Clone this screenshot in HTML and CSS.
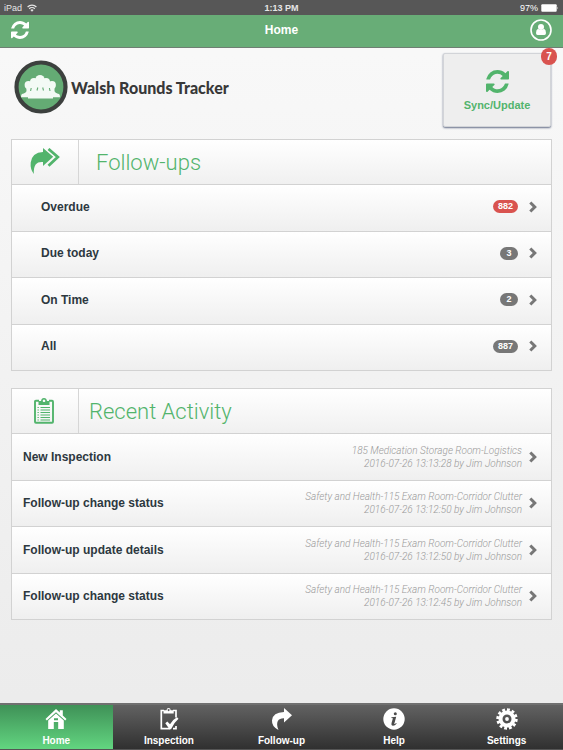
FILE: index.html
```html
<!DOCTYPE html>
<html lang="en">
<head>
<meta charset="utf-8">
<meta name="viewport" content="width=device-width, initial-scale=1">
<title>Walsh Rounds Tracker</title>
<link rel="stylesheet" href="styles.css">
</head>
<body>
<svg class="defs" aria-hidden="true">
  <symbol id="sync" viewBox="0 0 1536 1536"><path d="M1511 928q0 5-1 7-64 268-268 434.500t-478 166.500q-146 0-282.500-55t-243.500-157l-129 129q-19 19-45 19t-45-19-19-45v-448q0-26 19-45t45-19h448q26 0 45 19t19 45-19 45l-137 137q71 66 161 102t187 36q134 0 250-65t186-179q11-17 53-117 8-23 30-23h192q13 0 22.500 9.500t9.500 22.500zm25-800v448q0 26-19 45t-45 19h-448q-26 0-45-19t-19-45 19-45l138-138q-148-137-349-137-134 0-250 65t-186 179q-11 17-53 117-8 23-30 23h-199q-13 0-22.500-9.500t-9.500-22.500v-7q65-268 270-434.500t480-166.500q146 0 284 55.500t245 156.500l130-129q19-19 45-19t45 19 19 45z"/></symbol>
  <symbol id="chevron" viewBox="0 0 8 12"><path d="M1.300 1.500L5.800 6l-4.500 4.500" fill="none" stroke="currentColor" stroke-width="3"/></symbol>
</svg>

<div class="status">
  <span class="device">iPad
    <svg class="wifi" viewBox="0 0 10 8" aria-hidden="true"><path d="M.6 3a6.300 6.300 0 0 1 8.800 0M2.200 4.800a4 4 0 0 1 5.600 0" fill="none" stroke="currentColor" stroke-width="1.200"/><path d="M5 7.800L3.400 6.100a2.300 2.300 0 0 1 3.200 0z"/></svg>
  </span>
  <span class="clock">1:13 PM</span>
  <span class="power">97%
    <svg class="battery" viewBox="0 0 18 8" aria-hidden="true"><rect x=".3" y=".3" width="15.400" height="7.400" rx="1"/><path d="M16.500 2.500q1.300 1.500 0 3z"/></svg>
  </span>
</div>

<header class="bar">
  <button class="bar-button" type="button" aria-label="Sync"><svg class="bar-sync"><use href="#sync"/></svg></button>
  <h1>Home</h1>
  <button class="bar-button" type="button" aria-label="Account">
    <svg class="account" viewBox="0 0 22 22"><circle cx="11" cy="11" r="10" fill="none" stroke="currentColor" stroke-width="1.600"/><circle cx="11" cy="8" r="3"/><path d="M8 9.800q3 2.600 6 0 2 .8 2 4.200 0 2-1.600 2H7.600Q6 16 6 14q0-3.400 2-4.200z"/></svg>
  </button>
</header>

<main>
  <div class="intro">
    <div class="brand">
      <svg class="logo" viewBox="0 0 54 54" aria-hidden="true">
        <circle cx="27" cy="27" r="24.500" fill="#64ab74" stroke="#3c403e" stroke-width="4.200"/>
        <g fill="#f3faf5">
          <circle cx="26" cy="19.500" r="4.600"/><circle cx="20" cy="22" r="4"/><circle cx="32" cy="22" r="4"/><circle cx="14.500" cy="25" r="3.900"/><circle cx="38" cy="25" r="3.900"/>
          <path d="M12 22h28.500v9q.5 2 4.500 3 1 .4 1 3.200H39v1.300H14v-1.300H7q0-2.800 1-3.200 4-1 4.500-3z"/>
        </g>
        <path d="M16.600 31l.6-3M23 30.500l.8-3M29.500 30.500l-.8-3M36 31l-.6-3" stroke="#64ab74" stroke-width="1.100"/>
      </svg>
      <span>Walsh Rounds Tracker</span>
    </div>
    <button class="sync" type="button">
      <svg class="sync-icon" aria-hidden="true"><use href="#sync"/></svg>
      Sync/Update
      <span class="alert">7</span>
    </button>
  </div>

  <section class="panel">
    <div class="head">
      <div class="head-icon"><svg class="forward" viewBox="0 0 30 27" aria-hidden="true"><path d="M13 0l10.200 8.700L13 18v-4C7 13.500 3.500 16 3.800 26Q0 21 .7 14.500 2 4.500 13 4z"/><path d="M18.500 1l9.300 8-9.300 8.700" fill="none" stroke="currentColor" stroke-width="2.800"/></svg></div>
      <h2 class="spaced">Follow-ups</h2>
    </div>
    <ul class="rows indented">
      <li><a href="#overdue"><span class="name">Overdue</span><span class="count red">882</span><svg class="chevron"><use href="#chevron"/></svg></a></li>
      <li><a href="#today"><span class="name">Due today</span><span class="count">3</span><svg class="chevron"><use href="#chevron"/></svg></a></li>
      <li><a href="#on-time"><span class="name">On Time</span><span class="count">2</span><svg class="chevron"><use href="#chevron"/></svg></a></li>
      <li><a href="#all"><span class="name">All</span><span class="count">887</span><svg class="chevron"><use href="#chevron"/></svg></a></li>
    </ul>
  </section>

  <section class="panel">
    <div class="head">
      <div class="head-icon"><svg class="clipboard" viewBox="0 0 23 26" aria-hidden="true"><path d="M5 2.800H1.900Q1 2.800 1 3.700v20.100q0 .9.900.9h16.200q.9 0 .9-.9V3.700q0-.9-.9-.9H15" fill="none" stroke="currentColor" stroke-width="1.900"/><path fill-rule="evenodd" d="M4.500 3H7q.4-3 3-3t3 3h2.500v4h-11zM10 1.500a1.300 1.300 0 1 0 .01 0z"/><path d="M6.500 9.500h9.500M6.500 12h9.500M6.500 14.500h9.500M6.500 17h9.500M6.500 19.500h9.500M6.500 22h9.500M3.500 9.500h1.300M3.500 12h1.300M3.500 14.500h1.300M3.500 17h1.300M3.500 19.500h1.300M3.500 22h1.300" stroke="currentColor" stroke-width="1.100"/></svg></div>
      <h2>Recent Activity</h2>
    </div>
    <ul class="rows">
      <li><a href="#a1"><span class="name">New Inspection</span><span class="detail">185 Medication Storage Room-Logistics<br>2016-07-26 13:13:28 by Jim Johnson</span><svg class="chevron"><use href="#chevron"/></svg></a></li>
      <li><a href="#a2"><span class="name">Follow-up change status</span><span class="detail">Safety and Health-115 Exam Room-Corridor Clutter<br>2016-07-26 13:12:50 by Jim Johnson</span><svg class="chevron"><use href="#chevron"/></svg></a></li>
      <li><a href="#a3"><span class="name">Follow-up update details</span><span class="detail">Safety and Health-115 Exam Room-Corridor Clutter<br>2016-07-26 13:12:50 by Jim Johnson</span><svg class="chevron"><use href="#chevron"/></svg></a></li>
      <li><a href="#a4"><span class="name">Follow-up change status</span><span class="detail">Safety and Health-115 Exam Room-Corridor Clutter<br>2016-07-26 13:12:45 by Jim Johnson</span><svg class="chevron"><use href="#chevron"/></svg></a></li>
    </ul>
  </section>
</main>

<nav class="tabs">
  <a class="active" href="#home"><svg viewBox="0 0 22 22" aria-hidden="true"><path d="M11 1l3.800 3.600V2.300h3v5.200L21.500 11l-1.300 1.400L11 4.300l-9.200 8.100L.5 11z"/><path fill-rule="evenodd" d="M11 5.600l7.800 6.900V21h-5.600v-7H8.800v7H3.200v-8.500zM9 10.200v2h4v-2z"/></svg>Home</a>
  <a href="#inspection"><svg viewBox="0 0 22 22" aria-hidden="true"><path d="M6 2.500H3.300v18.200H12M15 2.500h3v7M18 18v2.700h-3" fill="none" stroke="currentColor" stroke-width="1.700"/><path fill-rule="evenodd" d="M5.500 2.200h3Q8.700 0 10.600 0t2.100 2.200h3v3.300H5.500zM10.600 1a1 1 0 1 0 .01 0z"/><path d="M7.300 15.200l2-1.700 2.700 2.800q2.800-4.800 7-7l1.500 1.500q-4.500 3.800-7.500 10.400h-1.500z"/></svg>Inspection</a>
  <a href="#follow-up"><svg viewBox="0 0 22 22" aria-hidden="true"><path d="M14 0l8 7.300-8 7.200v-4.300C8.500 10 5.200 13.500 8.500 22Q1.500 18.500 2 12.300 2.700 4.500 14 4z"/></svg>Follow-up</a>
  <a href="#help"><svg viewBox="0 0 22 22" aria-hidden="true"><circle cx="11" cy="11" r="10.700"/><g fill="#4b4b4b"><circle cx="12.300" cy="5.800" r="1.500"/><path d="M8.500 9.300l4.700-.6-2 7.300q.7.300 1.900-1l.6.500q-1.800 2.500-4 2.300-1.800-.3-1.200-2.500l1.400-5-1.600-.2z"/></g></svg>Help</a>
  <a href="#settings"><svg viewBox="0 0 22 22" aria-hidden="true"><circle cx="11" cy="11" r="9.200" fill="none" stroke="currentColor" stroke-width="3" stroke-dasharray="2.817 2" pathLength="57.800"/><circle cx="11" cy="11" r="6.500" fill="none" stroke="currentColor" stroke-width="4"/><circle cx="11" cy="11" r="1.900"/></svg>Settings</a>
</nav>
</body>
</html>
```
FILE: styles.css
```css
* { box-sizing: border-box; }

body {
  margin: 0;
  min-height: 100vh;
  display: flex;
  flex-direction: column;
  font-family: "Liberation Sans", Arial, sans-serif;
  color: #2d3840;
  background: linear-gradient(#f9f9f9, #ebebeb);
}

h1, h2, ul { margin: 0; padding: 0; }
ul { list-style: none; }
a { color: inherit; text-decoration: none; }
button { font: inherit; border: 0; padding: 0; background: none; color: inherit; }
svg { fill: currentColor; flex: none; }
.defs { display: none; }

.status {
  display: grid;
  grid-template-columns: 1fr auto 1fr;
  align-items: center;
  height: 15px;
  padding: 0 4px;
  background: #575757;
  color: #e6e6e6;
  font-size: 9px;
}
.device, .power { display: flex; align-items: center; gap: 5px; }
.power { justify-content: flex-end; gap: 3px; color: #fff; }
.clock { font-weight: bold; }
.wifi { width: 10px; height: 8px; }
.battery { width: 18px; height: 8px; }

.bar {
  display: grid;
  grid-template-columns: 22px 1fr 22px;
  align-items: center;
  height: 33px;
  padding: 0 11px 2px 9px;
  background: #68ad77;
  border-bottom: 1px solid #6f7f73;
  color: #fff;
}
.bar h1 { padding-left: 2px; font-size: 12px; text-align: center; }
.bar-button { display: flex; justify-content: center; }
.bar-sync { width: 18px; height: 18px; }
.account { width: 22px; height: 22px; }

main { flex: 1; padding: 5px 11px 24px; }

.intro { display: flex; justify-content: space-between; margin-bottom: 12px; }
.brand {
  display: flex;
  align-items: center;
  gap: 3px;
  height: 68px;
  padding-left: 3px;
  font: 900 16px Lato, sans-serif;
  color: #383838;
}
.logo { width: 54px; height: 54px; }

.sync {
  position: relative;
  display: flex;
  flex-direction: column;
  align-items: center;
  justify-content: center;
  gap: 6px;
  width: 108px;
  height: 74px;
  margin-right: 1px;
  background: #eee;
  border: 1px solid #d2d4d8;
  border-radius: 2px;
  box-shadow: 0 1px 2px #66708a;
  color: #52b46c;
  font-size: 11px;
  font-weight: bold;
}
.sync-icon { width: 23px; height: 23px; }
.alert {
  position: absolute;
  top: -6px;
  right: -7px;
  width: 16px;
  border-radius: 8px;
  background: #d9534f;
  color: #fff;
  font-size: 10px;
  line-height: 17px;
  text-align: center;
}

.panel {
  margin-bottom: 17px;
  border: 1px solid #d2d2d2;
}
.head {
  display: flex;
  height: 44px;
  background: linear-gradient(#fff, #f0f0f0);
  color: #52b46c;
}
.head-icon {
  display: flex;
  align-items: center;
  justify-content: center;
  width: 67px;
  padding-bottom: 1px;
  border-right: 1px solid #d6d6d6;
}
.forward { width: 30px; height: 27px; }
.clipboard { width: 23px; height: 26px; }
h2 {
  padding-left: 10px;
  font: 300 22px/45px Roboto, sans-serif;
}
h2.spaced { padding-left: 17px; }

.rows { display: flex; flex-direction: column; min-height: 186px; }
.rows li {
  display: flex;
  flex: 1;
  border-top: 1px solid #d2d2d2;
  background: linear-gradient(#fff, #efefef);
}
.rows a { flex: 1; display: flex; align-items: center; padding: 0 14px 0 11px; }
.indented a { padding-left: 29px; padding-bottom: 2px; }
.name { flex: 1; font-size: 12px; font-weight: bold; }
.count {
  min-width: 18px;
  margin-right: 11px;
  padding: 0 5px;
  border-radius: 7px;
  background: #777;
  color: #fff;
  font-size: 9px;
  font-weight: bold;
  line-height: 13px;
  text-align: center;
}
.count.red { background: #d9534f; }
.chevron { width: 8px; height: 12px; color: #777; }
.detail {
  margin-right: 7px;
  color: #999;
  font: italic 300 10px/13px Roboto, sans-serif;
  text-align: right;
}

.tabs {
  display: grid;
  grid-template-columns: repeat(5, 1fr);
  height: 47px;
  border-top: 2px solid #707070;
  border-bottom: 1px solid #555;
  background: linear-gradient(#626262, #303030);
  color: #fff;
  font-size: 10px;
  font-weight: bold;
}
.tabs a {
  display: flex;
  flex-direction: column;
  align-items: center;
  gap: 5px;
  padding-top: 3px;
}
.tabs svg { width: 22px; height: 22px; }
.tabs .active { background: linear-gradient(#3f9157, #62d580); }
```
